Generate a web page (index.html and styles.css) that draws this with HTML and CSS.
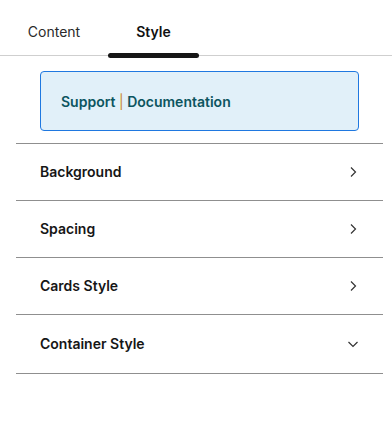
FILE: index.html
```html
<!DOCTYPE html>
<html>
  <head>
    <title>Style panel</title>
    <meta charset="UTF-8">
    <link rel="stylesheet" href="styles.css">
  </head>
  <body>
    <div class="panel">
      <div class="tabs">
        <div class="tab">Content</div>
        <div class="tab active">Style</div>
      </div>

      <div class="notice">
        <p><a href="#">Support</a> <span class="sep">|</span> <a href="#">Documentation</a></p>
      </div>

      <div class="sections">
        <div class="section">
          <span>Background</span>
          <svg class="chev" width="12" height="12" viewBox="0 0 12 12"><path d="M4 1.5 L8.5 6 L4 10.5" fill="none" stroke="#333" stroke-width="1.2"/></svg>
        </div>
        <div class="section">
          <span>Spacing</span>
          <svg class="chev" width="12" height="12" viewBox="0 0 12 12"><path d="M4 1.5 L8.5 6 L4 10.5" fill="none" stroke="#333" stroke-width="1.2"/></svg>
        </div>
        <div class="section">
          <span>Cards Style</span>
          <svg class="chev" width="12" height="12" viewBox="0 0 12 12"><path d="M4 1.5 L8.5 6 L4 10.5" fill="none" stroke="#333" stroke-width="1.2"/></svg>
        </div>
        <div class="section open">
          <span>Container Style</span>
          <svg class="chev" width="12" height="12" viewBox="0 0 12 12"><path d="M1.5 4 L6 8.5 L10.5 4" fill="none" stroke="#333" stroke-width="1.2"/></svg>
        </div>
      </div>
    </div>
  </body>
</html>
```
FILE: styles.css
```css
body {
  margin: 0;
  background: #fff;
  font-family: "Inter", "Noto Sans", sans-serif;
  color: #1c1c1c;
}

.tabs {
  display: flex;
  height: 55px;
  border-bottom: 1px solid #cfcfcf;
}

.tab {
  width: 108px;
  display: flex;
  align-items: center;
  justify-content: center;
  font-size: 14px;
  color: #2a2a2a;
  padding-top: 7px;
}

.tab.active {
  width: 91px;
  font-weight: 600;
  color: #111;
  position: relative;
}

.tab.active::after {
  content: "";
  position: absolute;
  left: 0;
  right: 0;
  bottom: -3px;
  height: 5px;
  border-radius: 3px;
  background: #161616;
}

.notice {
  margin: 15px 33px 12px 40px;
  height: 60px;
  box-sizing: border-box;
  border: 1px solid #1f78e0;
  border-radius: 4px;
  background: #e1f0f9;
  display: flex;
  align-items: center;
  padding-left: 20px;
  padding-top: 1px;
  font-size: 14px;
  font-weight: 600;
}

.notice p {
  margin: 0;
}

.notice a {
  color: #0c5560;
  text-decoration: none;
}

.notice .sep {
  color: #c9892e;
  font-weight: 400;
}

.sections {
  margin: 0 9px 0 16px;
  border-top: 1px solid #8f8f8f;
}

.section {
  height: 56px;
  border-bottom: 1px solid #8f8f8f;
  display: flex;
  align-items: center;
  justify-content: space-between;
  padding: 0 24px 1px 24px;
  box-sizing: border-box;
  font-size: 14px;
  font-weight: 600;
  color: #161616;
}

.section.open {
  height: 59px;
}

.section + .section {
  height: 57px;
}

.section.open {
  height: 59px;
}

.section:first-child {
  height: 57px;
}
```
